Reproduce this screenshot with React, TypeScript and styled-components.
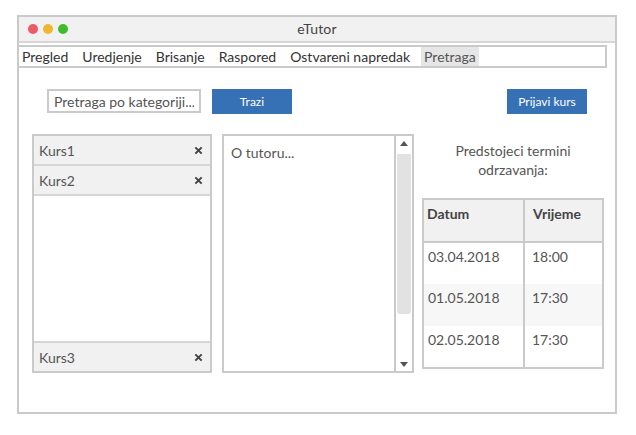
import styled, { createGlobalStyle } from "styled-components";

const GlobalStyle = createGlobalStyle`
  html, body {
    margin: 0;
    padding: 0;
    background: #fff;
  }
  body {
    font-family: Lato, "Open Sans", sans-serif;
    color: #555;
  }
`;

const courses = ["Kurs1", "Kurs2"];
const terms = [
  { date: "03.04.2018", time: "18:00" },
  { date: "01.05.2018", time: "17:30" },
  { date: "02.05.2018", time: "17:30" },
];
const navItems = ["Pregled", "Uredjenje", "Brisanje", "Raspored", "Ostvareni napredak", "Pretraga"];

function CloseIcon() {
  return (
    <Remove viewBox="0 0 10 10">
      <path d="M1.5 1.5 L8.5 8.5 M8.5 1.5 L1.5 8.5" stroke="#444" strokeWidth="2.2" />
    </Remove>
  );
}

export default function App() {
  return (
    <>
      <GlobalStyle />
      <Window>
        <TitleBar>
          <Lights>
            <Light $color="#ee5b67" />
            <Light $color="#efb731" />
            <Light $color="#3dbd2b" />
          </Lights>
          <WindowTitle>eTutor</WindowTitle>
        </TitleBar>
        <Nav>
          {navItems.map((item) => (
            <NavItem key={item} $active={item === "Pretraga"}>
              {item}
            </NavItem>
          ))}
        </Nav>
        <Content>
          <TopRow>
            <SearchInput placeholder="Pretraga po kategoriji..." />
            <Button $width={80}>Trazi</Button>
            <Spacer />
            <Button $width={80}>Prijavi kurs</Button>
          </TopRow>
          <MainRow>
            <List>
              {courses.map((c) => (
                <ListItem key={c}>
                  <span>{c}</span>
                  <CloseIcon />
                </ListItem>
              ))}
              <ListFill />
              <ListItem $last>
                <span>Kurs3</span>
                <CloseIcon />
              </ListItem>
            </List>
            <TextArea>
              <TextBody>O tutoru...</TextBody>
              <Scrollbar>
                <Arrow viewBox="0 0 8 5">
                  <polygon points="0,5 8,5 4,0" fill="#555" />
                </Arrow>
                <Thumb />
                <Arrow viewBox="0 0 8 5">
                  <polygon points="0,0 8,0 4,5" fill="#555" />
                </Arrow>
              </Scrollbar>
            </TextArea>
            <Side>
              <SideHeading>
                Predstojeci termini
                <br />
                odrzavanja:
              </SideHeading>
              <Table>
                <thead>
                  <tr>
                    <HeadCell $first>Datum</HeadCell>
                    <HeadCell>Vrijeme</HeadCell>
                  </tr>
                </thead>
                <tbody>
                  {terms.map((t, i) => (
                    <Row key={t.date} $shade={i === 1}>
                      <Cell $first>{t.date}</Cell>
                      <Cell>{t.time}</Cell>
                    </Row>
                  ))}
                </tbody>
              </Table>
            </Side>
          </MainRow>
        </Content>
      </Window>
    </>
  );
}

const Window = styled.div`
  margin: 15px 0 0 17px;
  width: 600px;
  height: 399px;
  box-sizing: border-box;
  border: 2px solid #cacaca;
  display: flex;
  flex-direction: column;
`;

const TitleBar = styled.div`
  height: 24px;
  background: #f1f1f1;
  border-bottom: 2px solid #d6d6d6;
  display: flex;
  align-items: center;
  position: relative;
`;

const Lights = styled.div`
  display: flex;
  gap: 5px;
  padding-left: 9px;
`;

const Light = styled.span<{ $color: string }>`
  width: 10px;
  height: 10px;
  border-radius: 50%;
  background: ${({ $color }) => $color};
`;

const WindowTitle = styled.div`
  position: absolute;
  left: 0;
  right: 0;
  top: 3px;
  text-align: center;
  font-size: 14px;
  color: #444;
  letter-spacing: 0.2px;
`;

const Nav = styled.div`
  margin: 2px 8px 0 -2px;
  height: 23px;
  box-sizing: border-box;
  border: 2px solid #cacaca;
  display: flex;
  align-items: stretch;
  padding-left: 0;
`;

const NavItem = styled.div<{ $active?: boolean }>`
  font-size: 14px;
  padding: 0 3px 0 3px;
  margin-right: 8px;
  display: flex;
  align-items: center;
  background: ${({ $active }) => ($active ? "#e6e6e6" : "transparent")};
  color: ${({ $active }) => ($active ? "#555" : "#333")};
`;

const Content = styled.div`
  padding: 21px 0 0 13px;
  display: flex;
  flex-direction: column;
  gap: 20px;
`;

const TopRow = styled.div`
  display: flex;
  align-items: flex-start;
  padding-left: 15px;
  padding-right: 28px;
  gap: 11px;
`;

const SearchInput = styled.input`
  width: 154px;
  height: 24px;
  box-sizing: border-box;
  border: 2px solid #cacaca;
  padding: 0 5px;
  font-family: Lato, sans-serif;
  font-size: 14px;
  color: #555;
  outline: none;
  &::placeholder {
    color: #555;
  }
`;

const Button = styled.button<{ $width: number }>`
  width: ${({ $width }) => $width}px;
  height: 25px;
  border: none;
  background: #3671b6;
  color: #fff;
  font-family: Lato, sans-serif;
  font-size: 12px;
  padding: 0;
`;

const Spacer = styled.div`
  flex: 1;
`;

const MainRow = styled.div`
  display: flex;
  align-items: flex-start;
`;

const List = styled.div`
  width: 180px;
  height: 239px;
  box-sizing: border-box;
  border: 2px solid #cacaca;
  display: flex;
  flex-direction: column;
`;

const ListItem = styled.div<{ $last?: boolean }>`
  height: 28px;
  flex: none;
  background: #f1f1f1;
  border-bottom: ${({ $last }) => ($last ? "none" : "2px solid #d6d6d6")};
  border-top: ${({ $last }) => ($last ? "2px solid #d6d6d6" : "none")};
  display: flex;
  align-items: center;
  justify-content: space-between;
  padding: 0 7px 0 5px;
  font-size: 14px;
  color: #555;
`;

const Remove = styled.svg`
  width: 9px;
  height: 9px;
  flex: none;
`;

const ListFill = styled.div`
  flex: 1;
`;

const TextArea = styled.div`
  margin-left: 10px;
  width: 192px;
  height: 239px;
  box-sizing: border-box;
  border: 2px solid #cacaca;
  display: flex;
`;

const TextBody = styled.div`
  flex: 1;
  padding: 8px 7px;
  font-size: 14px;
  color: #555;
`;

const Scrollbar = styled.div`
  width: 16px;
  border-left: 2px solid #cacaca;
  display: flex;
  flex-direction: column;
  align-items: center;
  padding: 5px 0 4px;
  gap: 8px;
`;

const Arrow = styled.svg`
  width: 8px;
  height: 5px;
  flex: none;
`;

const Thumb = styled.div`
  width: 14px;
  height: 160px;
  background: #e2e2e2;
  border-radius: 0 0 3px 3px;
  margin-bottom: auto;
`;

const Side = styled.div`
  margin-left: 8px;
  width: 182px;
  display: flex;
  flex-direction: column;
  align-items: stretch;
`;

const SideHeading = styled.div`
  text-align: center;
  font-size: 14px;
  line-height: 19px;
  color: #555;
  padding-top: 7px;
  height: 64px;
  box-sizing: border-box;
`;

const Table = styled.table`
  border-collapse: collapse;
  border: 2px solid #cacaca;
  width: 182px;
  font-size: 14px;
`;

const HeadCell = styled.th<{ $first?: boolean }>`
  height: 43px;
  box-sizing: border-box;
  background: #f1f1f1;
  text-align: left;
  vertical-align: top;
  padding: 5px 4px 0 ${({ $first }) => ($first ? "3px" : "8px")};
  font-weight: bold;
  color: #444;
  border-bottom: 2px solid #cacaca;
  border-right: ${({ $first }) => ($first ? "2px solid #cacaca" : "none")};
  width: ${({ $first }) => ($first ? "101px" : "auto")};
`;

const Row = styled.tr<{ $shade?: boolean }>`
  background: ${({ $shade }) => ($shade ? "#f7f7f7" : "#fff")};
`;

const Cell = styled.td<{ $first?: boolean }>`
  height: 42px;
  box-sizing: border-box;
  vertical-align: top;
  padding: 5px 4px 0 ${({ $first }) => ($first ? "4px" : "7px")};
  color: #555;
  border-right: ${({ $first }) => ($first ? "2px solid #cacaca" : "none")};
`;
